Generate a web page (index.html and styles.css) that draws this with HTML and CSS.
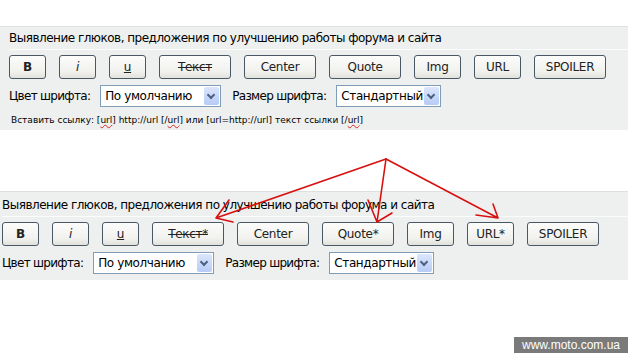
FILE: index.html
```html
<!DOCTYPE html>
<html lang="ru">
<head>
  <meta charset="UTF-8">
  <title>Форум</title>
  <link rel="stylesheet" href="styles.css">
</head>
<body>
  <div class="panel panel-old">
    <div class="title">Выявление глюков, предложения по улучшению работы форума и сайта</div>
    <div class="toolbar">
      <button class="btn w-s b">B</button>
      <button class="btn w-s i">i</button>
      <button class="btn w-s u">u</button>
      <button class="btn w-m s">Текст</button>
      <button class="btn w-m">Center</button>
      <button class="btn w-m">Quote</button>
      <button class="btn w-x">Img</button>
      <button class="btn w-x">URL</button>
      <button class="btn w-m">SPOILER</button>
    </div>
    <div class="fonts">
      <span class="lbl">Цвет шрифта:</span>
      <span class="select sel-color">По умолчанию<span class="arrow"></span></span>
      <span class="lbl">Размер шрифта:</span>
      <span class="select sel-size">Стандартный<span class="arrow"></span></span>
    </div>
    <div class="hint">Вставить ссылку: [<span class="sp">url</span>] http://url [/<span class="sp">url</span>] или [url=http://url] текст ссылки [/<span class="sp">url</span>]</div>
  </div>

  <div class="panel panel-new">
    <div class="title">Выявление глюков, предложения по улучшению работы форума и сайта</div>
    <div class="toolbar">
      <button class="btn w-s b">B</button>
      <button class="btn w-s i">i</button>
      <button class="btn w-s u">u</button>
      <button class="btn w-m s">Текст*</button>
      <button class="btn w-m">Center</button>
      <button class="btn w-m">Quote*</button>
      <button class="btn w-x">Img</button>
      <button class="btn w-x">URL*</button>
      <button class="btn w-m">SPOILER</button>
    </div>
    <div class="fonts">
      <span class="lbl">Цвет шрифта:</span>
      <span class="select sel-color">По умолчанию<span class="arrow"></span></span>
      <span class="lbl">Размер шрифта:</span>
      <span class="select sel-size">Стандартный<span class="arrow"></span></span>
    </div>
  </div>

  <svg class="arrows" width="628" height="353" viewBox="0 0 628 353">
    <g stroke="#d81010" stroke-width="1.6" fill="none" stroke-linecap="round">
      <path d="M386 159 L216 218 M216 218 L229 200 M216 218 L233 222"/>
      <path d="M386 159 L377 222 M377 222 L368 200 M377 222 L392 213"/>
      <path d="M386 159 L498 218 M498 218 L493 204 M498 218 L476 215"/>
    </g>
  </svg>

  <div class="mark">www.moto.com.ua</div>
</body>
</html>
```

FILE: styles.css
```css
body {
  margin: 0;
  background: #fff;
  font-family: "DejaVu Sans", Verdana, sans-serif;
  font-size: 12px;
  color: #000;
  width: 628px;
  height: 353px;
  position: relative;
  overflow: hidden;
}

.panel {
  background: #eef0ef;
  border-top: 1px solid #dde0df;
}

.panel-old {
  margin-top: 26px;
  padding: 0 0 4px 9px;
}

.panel-new {
  margin-top: 61px;
  padding: 2px 0 6px 2px;
}

.title {
  height: 22px;
  line-height: 22px;
  border-bottom: 1px solid #fafbfb;
  white-space: nowrap;
  letter-spacing: -0.5px;
}

.toolbar {
  display: flex;
  margin-top: 5px;
  height: 24px;
}

.btn {
  height: 24px;
  margin-right: 13px;
  padding: 0;
  font-family: "DejaVu Sans", Verdana, sans-serif;
  font-size: 12px;
  color: #222;
  border: 1px solid #4a5866;
  border-radius: 3px;
  background: linear-gradient(#fcfcfb, #f1f1ee 70%, #e2e2dc);
  letter-spacing: -0.3px;
}

.w-s { width: 37px; }
.w-m { width: 72px; }
.w-x { width: 47px; }

.b { font-weight: bold; }
.i { font-style: italic; }
.u { text-decoration: underline; }
.s { text-decoration: line-through; }

.fonts {
  display: flex;
  align-items: center;
  margin-top: 6px;
  height: 22px;
  white-space: nowrap;
}

.lbl {
  margin-right: 10px;
  letter-spacing: -0.7px;
}

.select {
  position: relative;
  height: 22px;
  line-height: 20px;
  border: 1px solid #7f9db9;
  background: #fff;
  padding-left: 4px;
  box-sizing: border-box;
  margin-right: 11px;
  letter-spacing: -0.4px;
}

.sel-color { width: 121px; }
.sel-size { width: 105px; }

.arrow {
  position: absolute;
  right: 1px;
  top: 1px;
  width: 15px;
  height: 18px;
  border-radius: 2px;
  background: linear-gradient(#dbe6fb, #b7cbf5);
}

.arrow::after {
  content: "";
  position: absolute;
  left: 4px;
  top: 5px;
  width: 4px;
  height: 4px;
  border-right: 2px solid #4d6185;
  border-bottom: 2px solid #4d6185;
  transform: rotate(45deg);
}

.hint {
  margin-top: 8px;
  padding-left: 2px;
  height: 11px;
  line-height: 11px;
  font-size: 9px;
  white-space: nowrap;
}

.sp {
  text-decoration: underline wavy #e02020;
}

.arrows {
  position: absolute;
  left: 0;
  top: 0;
}

.mark {
  position: absolute;
  right: 0;
  bottom: 0;
  width: 114px;
  height: 16px;
  line-height: 16px;
  background: #7a7a7a;
  color: #fff;
  font-family: "Liberation Sans", Arial, sans-serif;
  font-size: 12px;
  text-align: center;
}
```
